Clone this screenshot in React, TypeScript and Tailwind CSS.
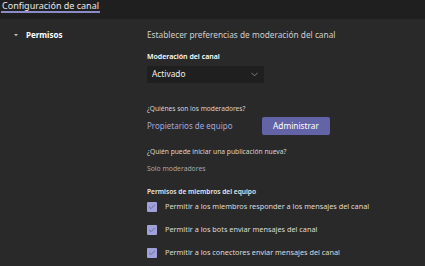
import { Check, ChevronDown } from 'lucide-react';

const perms = [
  'Permitir a los miembros responder a los mensajes del canal',
  'Permitir a los bots enviar mensajes del canal',
  'Permitir a los conectores enviar mensajes del canal',
];

export default function App() {
  return (
    <main
      className="flex h-[266px] w-[425px] flex-col overflow-hidden bg-[#292929] text-[#d6d6d6]"
      style={{ fontFamily: '"Noto Sans", "Open Sans", sans-serif' }}
    >
      <div className="flex h-[19px] shrink-0 items-start bg-[#1f1f1f] pl-[1px]">
        <div className="border-b-2 border-[#8b8cc7] pr-[1px] pl-[1px] text-[9px] leading-[11px] text-[#e8e8e8]">
          Configuración de canal
        </div>
      </div>

      <div className="flex flex-1">
        <div className="flex w-[147px] shrink-0 items-start pt-[9px] pl-[13px]">
          <div className="flex items-center gap-[7px]">
            <svg width="6" height="6" viewBox="0 0 6 6" className="text-[#bdbdbd]">
              <path d="M1 2 L5 2 L3 4.2 Z" fill="currentColor" />
            </svg>
            <span className="text-[8px] font-bold leading-[14px] text-white">Permisos</span>
          </div>
        </div>

        <div className="flex flex-1 flex-col pt-[9px]">
          <p className="text-[8.3px] leading-[14px] text-[#cfcfcf]">
            Establecer preferencias de moderación del canal
          </p>

          <p className="mt-[9px] text-[7px] font-semibold leading-[11px] text-white">
            Moderación del canal
          </p>
          <div className="mt-[4px] flex h-[17px] w-[117px] items-center justify-between bg-[#1f1f1f] pr-[4px] pl-[5px]">
            <span className="text-[8.3px] text-[#f0f0f0]">Activado</span>
            <ChevronDown size={11} strokeWidth={1.3} className="text-[#bdbdbd]" />
          </div>

          <p className="mt-[20px] text-[6.6px] leading-[11px] text-[#d6d6d6]">¿Quiénes son los moderadores?</p>
          <div className="mt-[3px] flex items-center">
            <span className="w-[115px] text-[8px] text-[#a6a7dc]">Propietarios de equipo</span>
            <button className="flex h-[18px] w-[68px] items-center justify-center rounded-[2px] bg-[#6264a7] text-[8.3px] text-white">
              Administrar
            </button>
          </div>

          <p className="mt-[11px] text-[6.7px] leading-[11px] text-[#d6d6d6]">
            ¿Quién puede iniciar una publicación nueva?
          </p>
          <p className="mt-[6px] text-[6.8px] leading-[11px] text-[#a8a8a8]">Solo moderadores</p>

          <p className="mt-[12px] text-[6.6px] font-semibold leading-[11px] text-[#e6e6e6]">
            Permisos de miembros del equipo
          </p>

          <div className="mt-[4px] flex flex-col gap-[12px]">
            {perms.map((p) => (
              <div key={p} className="flex items-center gap-[8px]">
                <div className="flex h-[10px] w-[10px] items-center justify-center rounded-[1px] bg-[#a0a1d8]">
                  <Check size={8} strokeWidth={2} className="text-[#4f5090]" />
                </div>
                <span className="text-[7.3px] leading-[11px] text-[#dcdcdc]">{p}</span>
              </div>
            ))}
          </div>
        </div>
      </div>
    </main>
  );
}
